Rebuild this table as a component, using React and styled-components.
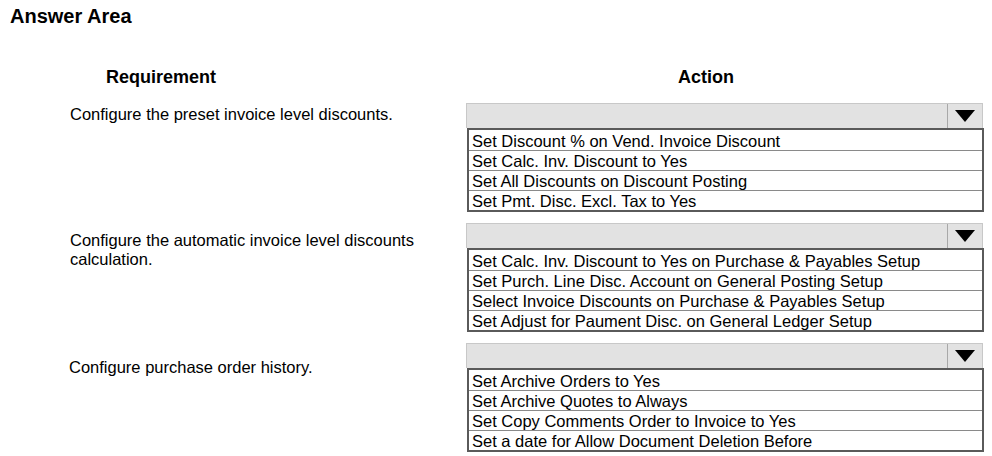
import styled, { createGlobalStyle } from "styled-components";

const GlobalStyle = createGlobalStyle`
  body {
    margin: 0;
    background: #ffffff;
    font-family: "Liberation Sans", Arial, sans-serif;
    color: #000000;
  }
`;

const rows = [
  {
    id: 1,
    requirement: "Configure the preset invoice level discounts.",
    offset: 2,
    indent: 70,
    actions: [
      "Set Discount % on Vend. Invoice Discount",
      "Set Calc. Inv. Discount to Yes",
      "Set All Discounts on Discount Posting",
      "Set Pmt. Disc. Excl. Tax to Yes",
    ],
  },
  {
    id: 2,
    requirement: "Configure the automatic invoice level discounts calculation.",
    offset: 8,
    indent: 70,
    actions: [
      "Set Calc. Inv. Discount to Yes on Purchase & Payables Setup",
      "Set Purch. Line Disc. Account on General Posting Setup",
      "Select Invoice Discounts on Purchase & Payables Setup",
      "Set Adjust for Paument Disc. on General Ledger Setup",
    ],
  },
  {
    id: 3,
    requirement: "Configure purchase order history.",
    offset: 15,
    indent: 69,
    actions: [
      "Set Archive Orders to Yes",
      "Set Archive Quotes to Always",
      "Set Copy Comments Order to Invoice to Yes",
      "Set a date for Allow Document Deletion Before",
    ],
  },
];

const Dropdown = ({ options }) => (
  <DropdownWrapper>
    <DropdownHeader>
      <HeaderField />
      <HeaderButton>
        <svg width="20" height="12" viewBox="0 0 20 12">
          <polygon points="0,0 20,0 10,12" fill="#000" />
        </svg>
      </HeaderButton>
    </DropdownHeader>
    <OptionList>
      {options.map((option) => (
        <OptionItem key={option}>{option}</OptionItem>
      ))}
    </OptionList>
  </DropdownWrapper>
);

const App = () => {
  return (
    <Page>
      <GlobalStyle />
      <Title>Answer Area</Title>
      <Table>
        <ColumnHead indent={106}>Requirement</ColumnHead>
        <ColumnHead indent={212}>Action</ColumnHead>
        {rows.map((row) => (
          <Row key={row.id}>
            <Requirement offset={row.offset} indent={row.indent}>
              {row.requirement}
            </Requirement>
            <Dropdown options={row.actions} />
          </Row>
        ))}
      </Table>
    </Page>
  );
};

const Page = styled.div`
  width: 992px;
  height: 456px;
  overflow: hidden;
  padding-top: 4px;
  box-sizing: border-box;
`;

const Title = styled.div`
  margin-left: 10px;
  font-size: 20px;
  font-weight: bold;
  line-height: 24px;
`;

const Table = styled.div`
  display: grid;
  grid-template-columns: 466px 518px;
  row-gap: 11px;
  margin-top: 38px;
`;

const ColumnHead = styled.div`
  padding-left: ${(props) => props.indent}px;
  font-size: 18px;
  font-weight: bold;
  line-height: 22px;
  margin-bottom: 4px;
`;

const Row = styled.div`
  display: contents;
`;

const Requirement = styled.div`
  padding-left: ${(props) => props.indent}px;
  padding-top: ${(props) => props.offset}px;
  padding-right: 40px;
  font-size: 16.5px;
  line-height: 19px;
`;

const DropdownWrapper = styled.div`
  display: flex;
  flex-direction: column;
`;

const DropdownHeader = styled.div`
  display: flex;
  height: 25px;
  margin-right: 1px;
  box-sizing: border-box;
  border: 1px solid #c8c8c8;
  border-bottom: none;
  background: #e2e2e2;
`;

const HeaderField = styled.div`
  flex: 1;
`;

const HeaderButton = styled.div`
  width: 34px;
  display: flex;
  align-items: center;
  justify-content: center;
  border-left: 1px solid #a8a8a8;
`;

const OptionList = styled.div`
  display: flex;
  flex-direction: column;
  margin-left: 1px;
  padding-top: 1px;
  border: 2px solid #5a5a5a;
`;

const OptionItem = styled.div`
  height: 19px;
  padding-left: 3px;
  font-size: 16.5px;
  line-height: 21px;
  white-space: nowrap;
  overflow: visible;
  & + & {
    border-top: 1px solid #8a8a8a;
  }
`;

export default App;
